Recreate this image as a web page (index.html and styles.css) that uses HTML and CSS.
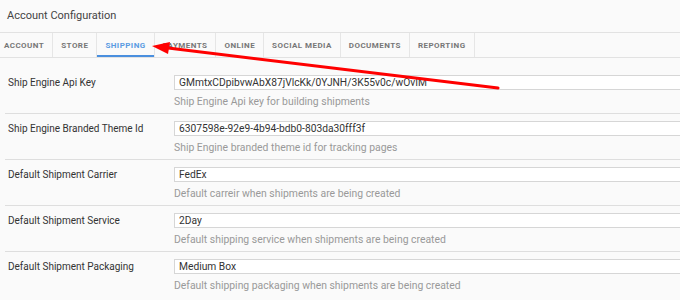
FILE: index.html
```html
<!DOCTYPE html>
<html lang="en">
<head>
    <meta charset="UTF-8">
    <title>Account Configuration</title>
    <link rel="stylesheet" href="styles.css">
</head>
<body>
    <div class="page">
        <div class="title">Account Configuration</div>

        <div class="tabs">
            <div class="tab first">Account</div>
            <div class="tab">Store</div>
            <div class="tab active">Shipping</div>
            <div class="tab">Payments</div>
            <div class="tab">Online</div>
            <div class="tab">Social Media</div>
            <div class="tab">Documents</div>
            <div class="tab">Reporting</div>
        </div>

        <div class="form">
            <div class="row">
                <div class="label">Ship Engine Api Key</div>
                <div class="field">
                    <div class="input">GMmtxCDpibvwAbX87jVlcKk/0YJNH/3K55v0c/wOvIM</div>
                    <div class="help">Ship Engine Api key for building shipments</div>
                </div>
            </div>
            <div class="row">
                <div class="label">Ship Engine Branded Theme Id</div>
                <div class="field">
                    <div class="input">6307598e-92e9-4b94-bdb0-803da30fff3f</div>
                    <div class="help">Ship Engine branded theme id for tracking pages</div>
                </div>
            </div>
            <div class="row">
                <div class="label">Default Shipment Carrier</div>
                <div class="field">
                    <div class="input">FedEx</div>
                    <div class="help">Default carreir when shipments are being created</div>
                </div>
            </div>
            <div class="row">
                <div class="label">Default Shipment Service</div>
                <div class="field">
                    <div class="input">2Day</div>
                    <div class="help">Default shipping service when shipments are being created</div>
                </div>
            </div>
            <div class="row">
                <div class="label">Default Shipment Packaging</div>
                <div class="field">
                    <div class="input">Medium Box</div>
                    <div class="help">Default shipping packaging when shipments are being created</div>
                </div>
            </div>
        </div>
    </div>

    <!-- annotation arrow drawn over the screenshot -->
    <svg class="arrow" width="680" height="300" viewBox="0 0 680 300">
        <line x1="498" y1="88" x2="164" y2="47.5" stroke="#f00" stroke-width="3" stroke-linecap="round"/>
        <polygon points="152,46 170,42 168,54" fill="#f00"/>
    </svg>
</body>
</html>
```

FILE: styles.css
```css
html, body {
    margin: 0;
    overflow: hidden;
}
body {
    font-family: Roboto, "Liberation Sans", sans-serif;
    background-color: #fafafa;
    color: #333;
}
.page {
    width: 720px;
}
.title {
    height: 32px;
    line-height: 31px;
    padding-left: 7px;
    font-size: 11px;
    color: #444;
}
.tabs {
    display: flex;
    border-top: 1px solid #e2e2e2;
    border-bottom: 1px solid #e2e2e2;
}
.tab {
    height: 24px;
    line-height: 25px;
    padding: 0 8px;
    border-right: 1px solid #e6e6e6;
    font-size: 8px;
    font-weight: bold;
    letter-spacing: 0.45px;
    text-transform: uppercase;
    color: #777;
    box-sizing: border-box;
}
.tab.first {
    padding-left: 4px;
}
.tab.active {
    color: #5a9be2;
    box-shadow: inset 0 -2px 0 #4a8fde;
}
.form {
    padding-top: 10px;
}
.row {
    display: flex;
    margin-left: 5px;
    padding: 7px 0 4px;
    border-bottom: 1px solid #dedede;
}
.row:last-child {
    border-bottom: none;
}
.label {
    width: 166px;
    padding-left: 3px;
    line-height: 15px;
    font-size: 10px;
    color: #333;
}
.field {
    flex: 1;
}
.input {
    height: 15px;
    line-height: 13px;
    padding: 0 4px;
    border: 1px solid #d6d6d6;
    background-color: #fff;
    font-size: 10.25px;
    color: #333;
    box-sizing: border-box;
}
.help {
    margin-top: 5px;
    line-height: 14px;
    font-size: 10.4px;
    color: #999;
}
.arrow {
    position: absolute;
    left: 0;
    top: 0;
}
```
